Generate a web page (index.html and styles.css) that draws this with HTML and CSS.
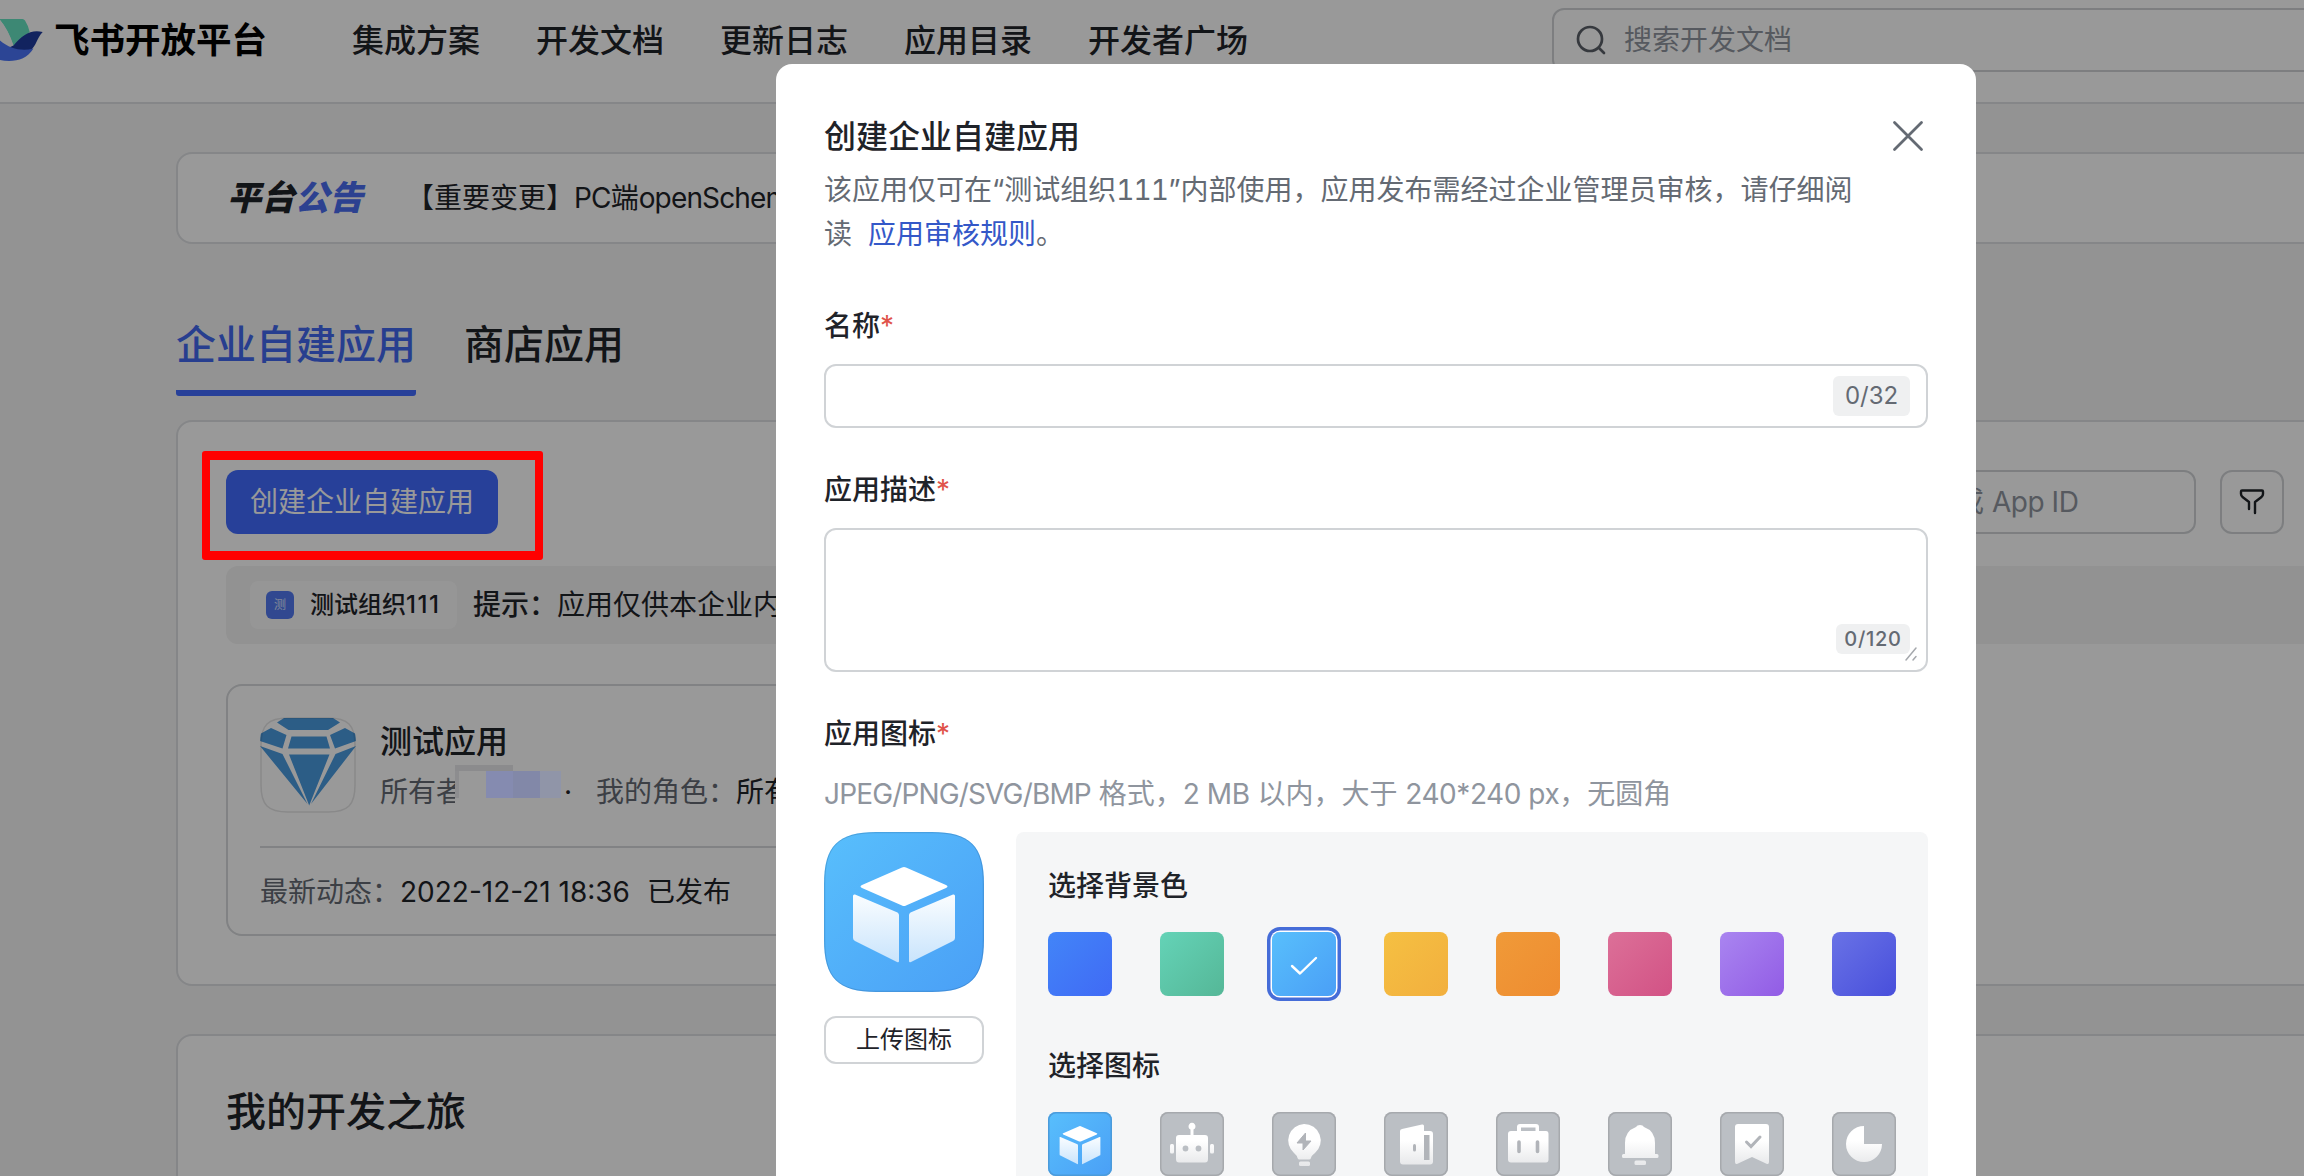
FILE: index.html
```html
<!DOCTYPE html>
<html lang="zh-CN">
<head>
<meta charset="utf-8">
<title>飞书开放平台</title>
<link rel="stylesheet" href="styles.css">
</head>
<body>
<svg class="defs" width="0" height="0" aria-hidden="true">
  <defs>
    <linearGradient id="sky" x1="0" y1="0" x2="1" y2="1"><stop offset="0" stop-color="#58bffc"/><stop offset="1" stop-color="#4a9ff6"/></linearGradient>
    <linearGradient id="face" x1="0" y1="0" x2="0" y2="1"><stop offset="0" stop-color="#fafdff"/><stop offset="1" stop-color="#c9e4fc"/></linearGradient>
    <linearGradient id="glyph" gradientUnits="userSpaceOnUse" x1="0" y1="12" x2="0" y2="54"><stop offset="0.4" stop-color="#fff"/><stop offset="1" stop-color="#e6e7e9"/></linearGradient>
    <clipPath id="squircle"><path d="M28 0H68C89 0 96 7 96 28V68C96 89 89 96 68 96H28C7 96 0 89 0 68V28C0 7 7 0 28 0Z"/></clipPath>
    <symbol id="cube" viewBox="0 0 160 160">
      <path d="M78 35.500Q80 34.500 82 35.500L122 53Q125 54.500 122 56L82 73.500Q80 74.500 78 73.500L38 56Q35 54.500 38 53Z" fill="#fff"/>
      <path d="M31 62.500L73.500 80.500Q75 81.500 75 83V129Q75 131 73 130L31 109Q29 108 29 106V64Q29 62 31 62.500Z" fill="url(#face)"/>
      <path d="M129 62.500L86.500 80.500Q85 81.500 85 83V129Q85 131 87 130L129 109Q131 108 131 106V64Q131 62 129 62.500Z" fill="url(#face)"/>
    </symbol>
  </defs>
</svg>

<div class="page">
  <header class="header">
    <svg class="logo" width="43" height="80" viewBox="0 0 43 80">
      <path d="M0 19H22.500Q24 19 25 20.500Q28.500 26 29.700 32L13.500 46Q8 30 0 20Z" fill="#67e3c2"/>
      <path d="M0 20Q8 29 13.500 45.500L10 48.500L0 41Z" fill="#f7f7f7"/>
      <path d="M42.700 32C31 29 22 35 13.500 45.500L8 48L20 54L31 50C36 46 37 38 42.700 32Z" fill="#1f3b9f"/>
      <path d="M0 40.500C10 49 22 51.500 33.500 48.500C28 57.500 19 61 9 61Q4 61 0 60Z" fill="#4a74f8"/>
    </svg>
    <div class="brand">飞书开放平台</div>
    <nav class="nav"><span>集成方案</span><span>开发文档</span><span>更新日志</span><span>应用目录</span><span>开发者广场</span></nav>
    <div class="search">
      <svg width="32" height="32" viewBox="0 0 32 32" fill="none" stroke="#5b6068" stroke-width="2.700" stroke-linecap="round"><circle cx="15" cy="15" r="12"/><path d="M24 24L29 29"/></svg>
      <span>搜索开发文档</span>
    </div>
  </header>

  <main class="main">
    <section class="notice">
      <div class="notice-title">平台<em>公告</em></div>
      <div class="notice-text">【重要变更】<span class="tight">PC</span>端<span class="tight">openSchema</span></div>
    </section>

    <div class="tabs"><div class="tab tab-active">企业自建应用</div><div class="tab">商店应用</div></div>

    <section class="card apps">
      <div class="toolbar">
        <button class="primary">创建企业自建应用</button>
        <div class="tools">
          <div class="app-search">应用名称或 <span class="snug">App ID</span></div>
          <div class="filter">
            <svg width="28" height="28" viewBox="0 0 28 28" fill="none" stroke="#1f2329" stroke-width="2.400" stroke-linecap="round" stroke-linejoin="round"><path d="M11 21V14L4.500 9Q3 7.500 3 6V3.500Q3 2.500 4 2.500H24Q25 2.500 25 3.500V6Q25 7.500 23.500 9L17 14V25"/></svg>
          </div>
        </div>
      </div>
      <div class="tip">
        <div class="org"><span class="org-icon">测</span><span>测试组织<span class="wide">111</span></span></div>
        <div class="tip-text"><b>提示：</b>应用仅供本企业内部使用</div>
      </div>
      <article class="app">
        <div class="app-head">
          <svg width="96" height="96" viewBox="0 0 96 96">
            <path d="M28 0H68C89 0 96 7 96 28V68C96 89 89 96 68 96H28C7 96 0 89 0 68V28C0 7 7 0 28 0Z" fill="#fff"/>
            <g clip-path="url(#squircle)" fill="#4a9be0"><path d="M17 5.500L24 1H73L80 5.500L68 13H28.500ZM11 11L26.500 18L22.500 31.500L0 24V17ZM85 11L70 18L75 31.500L96 24V17ZM31.500 19.500H66.500L70 31.500H28ZM0 29L22.500 37L47.500 87ZM96 29L75.500 37L51 87ZM29 37.500H69.500L49.200 88.500Z"/></g>
            <path d="M28 1H68C88 1 95 8 95 28V68C95 88 88 95 68 95H28C8 95 1 88 1 68V28C1 8 8 1 28 1Z" fill="none" stroke="#1f2329" stroke-opacity=".12" stroke-width="1.500"/>
          </svg>
          <div class="app-info">
            <div class="app-name">测试应用</div>
            <div class="app-meta"><span class="owner">所有者</span><span class="dot">·</span><span>我的角色：</span><strong>所有者</strong></div>
          </div>
        </div>
        <div class="app-foot">最新动态：<strong>2022-12-21 18:36</strong><strong class="state">已发布</strong></div>
      </article>
    </section>

    <section class="card journey"><h2>我的开发之旅</h2></section>
  </main>
</div>

<div class="mask"></div>
<div class="mosaic"><i class="m1"></i><i class="m2"></i><i class="m3"></i><i class="m4"></i></div>
<div class="highlight"></div>

<div class="modal">
  <div class="modal-head">
    <h1>创建企业自建应用</h1>
    <svg width="32" height="32" viewBox="0 0 32 32" stroke="#646a73" stroke-width="2.800" stroke-linecap="round"><path d="M2.500 2.500L29.500 29.500M29.500 2.500L2.500 29.500"/></svg>
  </div>
  <p class="desc">该应用仅可在“测试组织<span class="tnum">111</span>”内部使用，应用发布需经过企业管理员审核，请仔细阅<br>读<a>应用审核规则</a>。</p>

  <label class="label name-label">名称<i>*</i></label>
  <div class="input"><span class="count">0/32</span></div>

  <label class="label desc-label">应用描述<i>*</i></label>
  <div class="textarea">
    <span class="count small">0/120</span>
    <svg class="grip" width="14" height="16" viewBox="0 0 14 16" stroke="#a5a8ad" stroke-width="1.500" stroke-linecap="round"><path d="M2 14L12 2M9 14L12 10.500"/></svg>
  </div>

  <label class="label icon-label">应用图标<i>*</i></label>
  <p class="hint"><span class="tight">JPEG/PNG/SVG/BMP</span> 格式，<span class="snug">2 MB</span> 以内，大于 <span class="snug">240*240 px</span>，无圆角</p>

  <div class="picker">
    <div class="preview">
      <svg width="160" height="160" viewBox="0 0 160 160">
        <path d="M52 0H108C146 0 160 14 160 52V108C160 146 146 160 108 160H52C14 160 0 146 0 108V52C0 14 14 0 52 0Z" fill="url(#sky)"/>
        <path d="M52 .7H108C146 .7 159.300 14 159.300 52V108C159.300 146 146 159.300 108 159.300H52C14 159.300 .7 146 .7 108V52C.7 14 14 .7 52 .7Z" fill="none" stroke="#1f4f80" stroke-opacity=".25"/>
        <use href="#cube"/>
      </svg>
      <button class="upload">上传图标</button>
    </div>
    <div class="panel">
      <h3>选择背景色</h3>
      <div class="row">
        <span class="sw blue"></span><span class="sw green"></span>
        <span class="sw sky"><svg width="64" height="64" viewBox="0 0 64 64" fill="none" stroke="#fff" stroke-width="2.400" stroke-linecap="round" stroke-linejoin="round"><path d="M20 34L28 41.500L44 26"/></svg></span>
        <span class="sw yellow"></span><span class="sw orange"></span><span class="sw pink"></span><span class="sw purple"></span><span class="sw indigo"></span>
      </div>
      <h3>选择图标</h3>
      <div class="row icons">
        <span class="ic on"><svg viewBox="0 0 160 160"><use href="#cube"/></svg></span>
        <span class="ic"><svg viewBox="0 0 64 64" fill="url(#glyph)"><path d="M30.500 17.500A3.500 3.500 0 1 1 33.500 17.500V23H45Q48 23 48 26V47Q48 50.500 45 50.500H19Q16 50.500 16 47V26Q16 23 19 23H30.500Z"/><rect x="10" y="32" width="4" height="9.500" rx="1.500"/><rect x="50" y="32" width="4" height="9.500" rx="1.500"/><g fill="#bbbfc4"><circle cx="25.500" cy="36.500" r="2.900"/><circle cx="38.500" cy="36.500" r="2.900"/></g></svg></span>
        <span class="ic"><svg viewBox="0 0 64 64" fill="url(#glyph)"><path d="M32 12A16.500 16.500 0 0 1 43 41Q39 44 39 46Q38.500 47.500 37 47.500H27.500Q26 47.500 25.500 46Q25 43.500 22 41A16.500 16.500 0 0 1 32 12Z"/><rect x="27" y="49.500" width="11" height="4.500" rx="1.500"/><path d="M33.500 21L25 31H31V38L39 29H33.500Z" fill="#b1b4b9" stroke="#b1b4b9" stroke-linejoin="round"/></svg></span>
        <span class="ic"><svg viewBox="0 0 64 64" fill="url(#glyph)"><path fill-rule="evenodd" d="M16 19Q16 17.500 18 17L38 12.500Q40 12 40 14V19H46Q49 19 49 22V49.500Q49 52.500 46 52.500H19Q16 52.500 16 49.500ZM40 23.500V48H45V23.500Z"/><path d="M40 23H45.500V48H40Z" fill="#b1b4b9"/><path d="M30.500 33.500V38" stroke="#b1b4b9" stroke-width="3" stroke-linecap="round"/></svg></span>
        <span class="ic"><svg viewBox="0 0 64 64" fill="url(#glyph)"><path fill-rule="evenodd" d="M21 19V15Q21 12 24 12H40Q43 12 43 15V19H50Q52.500 19 52.500 22V47.500Q52.500 50.500 50 50.500H15Q12 50.500 12 47.500V22Q12 19 15 19ZM25 15.500V19H39.500V15.500Z"/><path d="M23 30V39.500M41.500 30V39.500" stroke="#b1b4b9" stroke-width="3.600" stroke-linecap="round"/></svg></span>
        <span class="ic"><svg viewBox="0 0 64 64" fill="url(#glyph)"><path d="M28 15Q29 13 32 13T36 15Q47 19 47 31V42H49Q50.500 42 50.500 43.500V44.500Q50.500 46 49 46H15.500Q14 46 14 44.500V43.500Q14 42 15.500 42H17V31Q17 19 28 15Z"/><rect x="26.500" y="48.500" width="11.500" height="4.500" rx="1.500"/></svg></span>
        <span class="ic"><svg viewBox="0 0 64 64" fill="url(#glyph)"><path d="M15 15Q15 12 18 12H46Q49 12 49 15V50Q49 53 46 51.500L32 45L18 51.500Q15 53 15 50Z"/><path d="M26.500 30L31 34.500L40 25" fill="none" stroke="#b1b4b9" stroke-width="3" stroke-linecap="round"/></svg></span>
        <span class="ic"><svg viewBox="0 0 64 64" fill="url(#glyph)"><path d="M32 14A18 18 0 1 0 50 32H32Z"/></svg></span>
      </div>
    </div>
  </div>
</div>
</body>
</html>
```
FILE: styles.css
```css
* { box-sizing: border-box; }
html, body { margin: 0; width: 100%; height: 1176px; overflow: hidden; }
body {
  position: relative;
  font-family: Inter, "Noto Sans CJK SC", sans-serif;
  font-size: 28px;
  line-height: 44px;
  color: #1f2329;
  background: #f5f5f6;
}
h1, h2, h3, p { margin: 0; font-weight: 500; }
button { font: inherit; padding: 0; }
strong, b { font-weight: 500; }
i, em { font-style: normal; }
svg { display: block; flex: none; }
.defs { position: absolute; }
.tight { letter-spacing: -.85px; font-feature-settings: "calt" 0; }
.snug { letter-spacing: -.45px; font-feature-settings: "calt" 0; }
.wide { letter-spacing: 1.6px; }

.page { width: 2360px; height: 1176px; overflow: hidden; }
.header {
  height: 104px;
  display: flex;
  align-items: flex-start;
  background: #fff;
  border-bottom: 2px solid #dee0e3;
}
.brand { margin-left: 11px; width: 214px; font-size: 35.500px; font-weight: 700; line-height: 82px; color: #000; white-space: nowrap; }
.nav { display: flex; gap: 56px; margin-left: 85px; font-size: 32px; font-weight: 500; line-height: 82px; white-space: nowrap; }
.search {
  display: flex;
  align-items: center;
  gap: 17px;
  margin: 8px 0 0 304px;
  padding-left: 21px;
  width: 900px;
  height: 64px;
  flex: none;
  border: 2px solid #d0d3d6;
  border-radius: 12px;
  color: #8f959e;
}

.main { padding: 48px 0 0 176px; }
.notice, .card { background: #fff; border: 2px solid #dee0e3; border-radius: 16px; }
.notice { height: 92px; display: flex; align-items: center; padding-left: 49px; white-space: nowrap; }
.notice-title { width: 179px; font-size: 34px; font-weight: 900; font-style: italic; }
.notice-title em { color: #4a6df0; font-style: italic; }

.tabs { display: flex; gap: 48px; margin-top: 64px; height: 88px; font-size: 40px; line-height: 73px; font-weight: 500; }
.tab { height: 88px; }
.tab-active { color: #4268ee; border-bottom: 6px solid #416bff; border-radius: 0 0 3px 3px; }
.card { padding-left: 48px; }
.apps { margin-top: 24px; height: 566px; padding-top: 48px; }
.toolbar { display: flex; justify-content: space-between; padding-right: 74px; }
.primary { width: 272px; height: 64px; border: 0; border-radius: 12px; background: #416bff; color: #fff; }
.tools { display: flex; gap: 24px; }
.app-search { width: 460px; height: 64px; padding-left: 106px; line-height: 60px; border: 2px solid #d0d3d6; border-radius: 12px; color: #8f959e; white-space: nowrap; }
.filter { width: 64px; height: 64px; display: grid; place-items: center; border: 2px solid #d0d3d6; border-radius: 12px; }
.tip { display: flex; align-items: center; gap: 16px; margin-top: 32px; height: 78px; padding-left: 24px; border-radius: 12px; background: #f3f3f3; white-space: nowrap; }
.org { display: flex; align-items: center; gap: 16px; width: 207px; height: 48px; padding-left: 16px; border-radius: 8px; background: #fafafa; font-size: 24px; font-weight: 500; }
.org-icon { width: 28px; height: 28px; border-radius: 6px; background: #5279f0; color: #d6e0ff; font-size: 12px; line-height: 28px; text-align: center; font-weight: 400; }
.app { margin-top: 40px; height: 252px; width: 1100px; padding: 31px 32px 0; border: 2px solid #d7d9dc; border-radius: 16px; }
.app-head { display: flex; gap: 24px; height: 131px; border-bottom: 2px solid #d7d9dc; }
.app-name { font-size: 32px; font-weight: 500; line-height: 50px; }
.app-meta { display: flex; margin-top: 1px; line-height: 48px; color: #646a73; white-space: nowrap; }
.owner { width: 84px; }
.dot { width: 28px; margin-left: 100px; margin-right: 4px; color: #1f2329; }
.app-meta strong, .app-foot strong { color: #1f2329; font-weight: 400; }
.app-foot { padding-top: 22px; color: #646a73; white-space: nowrap; }
.app-foot .state { margin-left: 17px; }
.journey { margin-top: 48px; height: 240px; padding-top: 46px; }
.journey h2 { font-size: 40px; line-height: 60px; }

.mask { position: absolute; inset: 0; background: rgba(0, 0, 0, .4); }
.mosaic { position: absolute; left: 455px; top: 765px; width: 106px; height: 42px; display: grid; grid-template-columns: 31px 27px 27px 21px; grid-template-rows: 6px 27px 9px; }
.mosaic i { grid-row: 2; }
.m1 { background: #999; border-left: 4px solid #8d8d8f; }
.m2 { background: #858bb0; }
.m3 { background: #8288a8; }
.m4 { background: #9095a8; }
.mosaic::before { content: ""; grid-column: 1 / 3; grid-row: 1; background: #8b8b8d; }
.mosaic::after { content: ""; grid-column: 1; grid-row: 3; background: #999; }
.highlight { position: absolute; left: 202px; top: 451px; width: 341px; height: 109px; border: solid #f00; border-width: 9px 8px; border-radius: 3px; }

.modal { position: absolute; left: 776px; top: 64px; width: 1200px; height: 1112px; padding: 48px 48px 0; overflow: hidden; background: #fff; border-radius: 16px 16px 0 0; }
.modal-head { display: flex; justify-content: space-between; align-items: center; height: 48px; padding-right: 4px; }
.modal-head h1 { padding-top: 2px; font-size: 32px; line-height: 48px; }
.desc { margin-top: 8px; font-weight: 400; color: #646a73; white-space: nowrap; }
.desc a { margin-left: 16px; color: #3458c8; }
.tnum { font-variant-numeric: tabular-nums; letter-spacing: -.9px; }
.label { display: block; font-weight: 500; }
.label i { color: #e0524a; font-weight: 400; }
.name-label { margin-top: 48px; }
.input { display: flex; align-items: center; justify-content: flex-end; margin-top: 16px; height: 64px; padding-right: 16px; border: 2px solid #d0d3d6; border-radius: 12px; }
.count { width: 77px; height: 40px; border-radius: 6px; background: #eff0f1; color: #646a73; font-size: 24px; line-height: 40px; text-align: center; }
.desc-label { margin-top: 40px; }
.textarea { display: flex; align-items: flex-end; justify-content: flex-end; position: relative; margin-top: 16px; height: 144px; padding: 0 16px 16px 0; border: 2px solid #d0d3d6; border-radius: 12px; }
.count.small { width: 74px; height: 30px; font-size: 20px; font-weight: 500; letter-spacing: .7px; line-height: 30px; }
.grip { position: absolute; right: 8px; bottom: 8px; }
.icon-label { margin-top: 40px; }
.hint { margin-top: 16px; font-weight: 400; color: #8f959e; white-space: nowrap; }
.picker { display: flex; gap: 32px; margin-top: 16px; }
.preview { width: 160px; }
.upload { display: block; width: 160px; height: 48px; margin-top: 24px; border: 2px solid #d0d3d6; border-radius: 12px; background: #fff; color: #1f2329; font-size: 24px; }
.panel { flex: 1; height: 344px; padding: 32px 32px 0; border-radius: 8px 8px 0 0; background: #f5f6f7; }
.panel h3 { font-size: 28px; line-height: 44px; }
.row { display: flex; gap: 48px; margin: 24px 0 48px; }
.sw, .ic { width: 64px; height: 64px; flex: none; border-radius: 8px; }
.blue { background: linear-gradient(135deg, #4285f8, #406af5); }
.green { background: linear-gradient(135deg, #64d3b7, #55b797); }
.sky { background: linear-gradient(135deg, #58bffc, #4a9ff6); box-shadow: 0 0 0 1.500px #fff, 0 0 0 5px #456cd8; }
.yellow { background: linear-gradient(135deg, #f5c042, #f2af3e); }
.orange { background: linear-gradient(135deg, #f09a38, #ee8c31); }
.pink { background: linear-gradient(135deg, #dc7098, #d25285); }
.purple { background: linear-gradient(135deg, #a985f0, #925ce5); }
.indigo { background: linear-gradient(135deg, #6972e6, #484fdb); }
.ic { background: #bbbfc4; box-shadow: inset 0 0 0 1.500px #a6a9ad; }
.ic.on { background: linear-gradient(135deg, #58bffc, #4a9ff6); box-shadow: inset 0 0 0 1.500px #4b9bdb; }
.ic svg { width: 64px; height: 64px; }
```
